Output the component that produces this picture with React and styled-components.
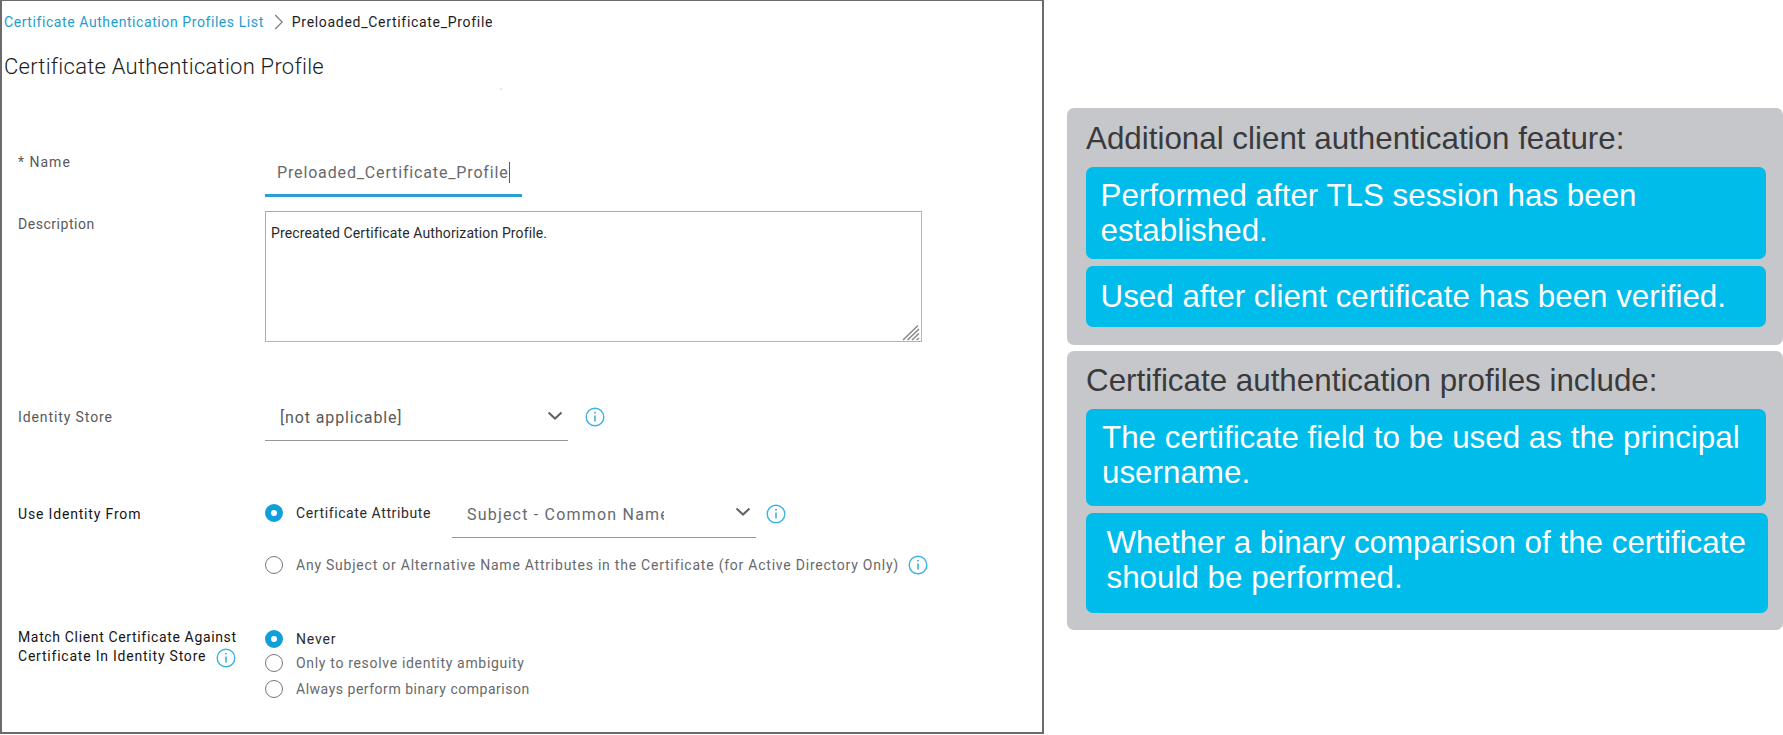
import React from "react";
import styled, { createGlobalStyle } from "styled-components";

const GlobalStyle = createGlobalStyle`
  * { box-sizing: border-box; }
  body { margin: 0; background: #fff; overflow: hidden; }
`;

const Page = styled.div`
  display: flex;
  width: 1783px;
  height: 735px;
`;

const Panel = styled.main`
  width: 1044px;
  height: 734px;
  flex: none;
  border: 2px solid #6a6a6f;
  border-top-width: 1.5px;
  background: #fff;
  font-family: Roboto, "Liberation Sans", sans-serif;
  color: #58595b;
`;

const Text = styled.span`
  font-size: ${(p) => p.$size || 14}px;
  font-weight: ${(p) => p.$weight || 400};
  letter-spacing: ${(p) => p.$track || 0}px;
  color: ${(p) => p.$color || "inherit"};
  white-space: nowrap;
`;

const Breadcrumb = styled.nav`
  display: flex;
  align-items: center;
  height: 28px;
  margin-top: 7px;
  padding-left: 2px;
  line-height: 28px;
`;

const Separator = styled.svg`
  width: 10px;
  height: 16px;
  margin: 0 8px 0 10px;
  flex: none;
`;

const Title = styled.h1`
  margin: 15px 0 0 2px;
  font-size: 22px;
  font-weight: 300;
  letter-spacing: 0.24px;
  line-height: 31px;
  color: #1c1c1e;
`;

const Speck = styled.div`
  width: 2px;
  height: 2px;
  margin: 6px 0 0 498px;
  border-radius: 50%;
  background: #dcdcdc;
`;

const FormRow = styled.div`
  display: grid;
  grid-template-columns: 247px 1fr;
  align-items: start;
  margin-top: ${(p) => p.$gap}px;
  padding-left: 16px;
`;

const Label = styled.label`
  display: block;
  margin-top: ${(p) => p.$offset || 0}px;
  line-height: ${(p) => p.$line || 18}px;
  color: ${(p) => (p.$dark ? "#151517" : "#58595b")};
`;

const LabelLine = styled.div`
  display: flex;
  align-items: center;
  height: 19.3px;
`;

const Input = styled.div`
  display: flex;
  align-items: center;
  width: 257px;
  height: 46px;
  padding-left: 12px;
  border-bottom: 3px solid #2a9fd0;
`;

const Caret = styled.span`
  width: 1px;
  height: 21px;
  background: #58595b;
`;

const TextArea = styled.div`
  position: relative;
  width: 657px;
  height: 131px;
  padding: 12px 5px;
  border: 1px solid #aaaaac;
  border-bottom: 1.5px solid #b4b4b6;
  border-right-color: #b8b8ba;
  line-height: 18px;
`;

const Grip = styled.svg`
  position: absolute;
  right: 1px;
  bottom: 0;
  width: 18px;
  height: 17px;
`;

const Select = styled.div`
  display: flex;
  align-items: center;
  justify-content: space-between;
  width: ${(p) => p.$width}px;
  height: ${(p) => p.$height}px;
  padding: 0 5px ${(p) => p.$bottom || 0}px 15px;
  border-bottom: 1px solid #97979a;
`;

const SelectValue = styled.span`
  display: block;
  max-width: ${(p) => p.$max || 250}px;
  overflow: hidden;
  white-space: nowrap;
`;

const ChevronSvg = styled.svg`
  width: 16px;
  height: 10px;
  flex: none;
  margin-bottom: ${(p) => p.$lift || 0}px;
`;

const InfoSvg = styled.svg`
  width: 20px;
  height: 20px;
  flex: none;
  margin: ${(p) => p.$drop || 0}px 0 ${(p) => p.$lift || 0}px ${(p) => p.$gap}px;
`;

const Field = styled.div`
  display: flex;
  align-items: center;
`;

const RadioRow = styled.div`
  display: flex;
  align-items: center;
  align-self: flex-start;
  height: 20px;
  margin-top: ${(p) => p.$gap || 0}px;
`;

const RadioLabel = styled.span`
  display: flex;
  width: ${(p) => (p.$width ? `${p.$width}px` : "auto")};
  margin-left: 13px;
  line-height: 20px;
`;

const RadioMark = styled.span`
  width: 18px;
  height: 18px;
  flex: none;
  border-radius: 50%;
  background: #fff;
  border: ${(p) => (p.$on ? "6px solid #109fda" : "1.5px solid #78787b")};
`;

const Notes = styled.aside`
  display: flex;
  flex-direction: column;
  gap: 6.6px;
  width: 716px;
  margin-left: 23px;
  padding-top: 107.5px;
  font-family: "Liberation Sans", Arial, sans-serif;
  font-size: 31.35px;
  line-height: 35px;
`;

const NoteCard = styled.section`
  height: ${(p) => p.$height}px;
  padding: ${(p) => p.$top}px 0 0 19px;
  border-radius: 7px;
  background: #c6c7cb;
`;

const NoteHeading = styled.h2`
  margin: 0 0 11.2px;
  font-size: inherit;
  font-weight: 400;
  color: #3a3a3c;
  white-space: nowrap;
`;

const NoteItem = styled.p`
  width: ${(p) => p.$width || 680}px;
  height: ${(p) => p.$height}px;
  margin: 0 0 6.7px;
  padding: ${(p) => p.$top}px 0 0 ${(p) => p.$left}px;
  border-radius: 7px;
  background: #00bceb;
  color: #fff;
  white-space: nowrap;
`;

function Chevron({ lift }) {
  return (
    <ChevronSvg viewBox="0 0 16 10" $lift={lift}>
      <path d="M1.5 1.5 8 7.6l6.5-6.1" fill="none" stroke="#626265" strokeWidth="2" />
    </ChevronSvg>
  );
}

function Info({ gap, lift, drop }) {
  return (
    <InfoSvg viewBox="0 0 20 20" $gap={gap} $lift={lift} $drop={drop}>
      <circle cx="10" cy="10" r="8.8" fill="none" stroke="#3db2e2" strokeWidth="1.4" />
      <path d="M10 8.4v6" stroke="#4bb6e3" strokeWidth="1.7" />
      <circle cx="10" cy="5.7" r="1" fill="#4bb6e3" />
    </InfoSvg>
  );
}

function Radio({ on, gap, label, track, width, children }) {
  return (
    <RadioRow $gap={gap}>
      <RadioMark $on={on} />
      <RadioLabel $width={width}>
        <Text $track={track} $color={on ? "#2c2c2e" : "#68696b"}>{label}</Text>
      </RadioLabel>
      {children}
    </RadioRow>
  );
}

export default function App() {
  return (
    <Page>
      <GlobalStyle />
      <Panel>
        <Breadcrumb>
          <Text $track={0.58} $color="#1d9dd0">Certificate Authentication Profiles List</Text>
          <Separator viewBox="0 0 10 16">
            <path d="M1.2 1l7 7-7 7" fill="none" stroke="#7d7d80" strokeWidth="1.2" />
          </Separator>
          <Text $track={0.7} $color="#1c1c1e">Preloaded_Certificate_Profile</Text>
        </Breadcrumb>
        <Title>Certificate Authentication Profile</Title>
        <Speck />

        <FormRow $gap={61}>
          <Label $offset={2}><Text $track={1}>* Name</Text></Label>
          <Input>
            <Text $size={16} $track={0.85} $color="#68696b">Preloaded_Certificate_Profile</Text>
            <Caret />
          </Input>
        </FormRow>

        <FormRow $gap={14}>
          <Label $offset={4}><Text $track={0.54}>Description</Text></Label>
          <TextArea>
            <Text $track={0.12} $color="#2a2a2c">Precreated Certificate Authorization Profile.</Text>
            <Grip viewBox="0 0 18 17">
              <path
                d="M1 16 16 1.5M5.5 16 17 5M10 16l7-6.5M14.5 16l2.5-2"
                fill="none"
                stroke="#8a8a8d"
                strokeWidth="1.6"
              />
            </Grip>
          </TextArea>
        </FormRow>

        <FormRow $gap={53}>
          <Label $offset={13}><Text $track={0.9}>Identity Store</Text></Label>
          <Field>
            <Select $width={303} $height={46}>
              <SelectValue><Text $size={16} $track={0.87}>[not applicable]</Text></SelectValue>
              <Chevron lift={4} />
            </Select>
            <Info gap={16.5} lift={2} />
          </Field>
        </FormRow>

        <FormRow $gap={52}>
          <Label $offset={12} $dark><Text $track={0.83}>Use Identity From</Text></Label>
          <div>
            <Field>
              <Radio on gap={10} label="Certificate Attribute" track={0.61} width={156} />
              <Select $width={304} $height={45} $bottom={2}>
                <SelectValue $max={197}>
                  <Text $size={16} $track={1.2} $color="#68696b">Subject - Common Name</Text>
                </SelectValue>
                <Chevron lift={4} />
              </Select>
              <Info gap={9.5} lift={4} />
            </Field>
            <Radio
              gap={17}
              label="Any Subject or Alternative Name Attributes in the Certificate (for Active Directory Only)"
              track={0.77}
            >
              <Info gap={9.5} />
            </Radio>
          </div>
        </FormRow>

        <FormRow $gap={53}>
          <Label $dark $line={19.3}>
            <LabelLine><Text $track={0.65}>Match Client Certificate Against</Text></LabelLine>
            <LabelLine>
              <Text $track={0.78}>Certificate In Identity Store</Text>
              <Info gap={10} drop={2} />
            </LabelLine>
          </Label>
          <div>
            <Radio on gap={1} label="Never" track={0.8} />
            <Radio gap={4} label="Only to resolve identity ambiguity" track={0.68} />
            <Radio gap={6} label="Always perform binary comparison" track={0.52} />
          </div>
        </FormRow>
      </Panel>

      <Notes>
        <NoteCard $height={237.2} $top={13.3}>
          <NoteHeading>Additional client authentication feature:</NoteHeading>
          <NoteItem $height={92.3} $top={11} $left={14.5}>
            Performed after TLS session has been
            <br />
            established.
          </NoteItem>
          <NoteItem $height={61.3} $top={12.6} $left={14.5}>
            Used after client certificate has been verified.
          </NoteItem>
        </NoteCard>
        <NoteCard $height={278.7} $top={11.3}>
          <NoteHeading>Certificate authentication profiles include:</NoteHeading>
          <NoteItem $height={97.5} $top={10.8} $left={16}>
            The certificate field to be used as the principal
            <br />
            username.
          </NoteItem>
          <NoteItem $height={99.8} $top={12.3} $left={20.5} $width={681.5}>
            Whether a binary comparison of the certificate
            <br />
            should be performed.
          </NoteItem>
        </NoteCard>
      </Notes>
    </Page>
  );
}
